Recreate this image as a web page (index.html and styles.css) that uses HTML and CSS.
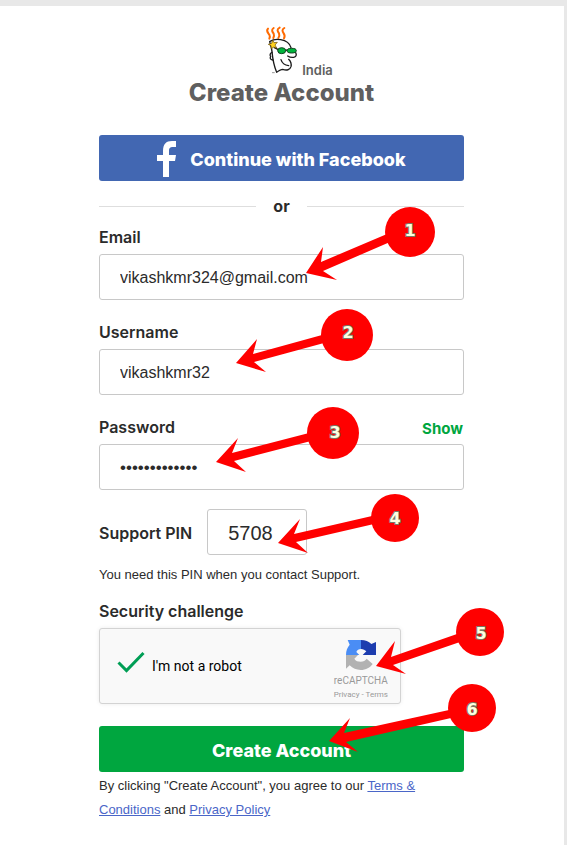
FILE: index.html
```html
<!DOCTYPE html>
<html lang="en">
<head>
<meta charset="utf-8">
<meta name="viewport" content="width=device-width, initial-scale=1">
<title>Create Account</title>
<link rel="stylesheet" href="styles.css">
</head>
<body>
<main class="card">
  <form class="signup">
    <header class="header">
      <div class="brand">
        <svg class="logo" viewBox="252 33 105 147" aria-hidden="true">
          <g fill="none" stroke="#ff6a00" stroke-width="6" stroke-linecap="round" stroke-linejoin="round">
            <path d="M264 41c-7 7 0 12 4 18 2 4 2 8 0 12"/>
            <path d="M281 39c-8 5-4 11 0 17 2 5 1 9-1 13"/>
            <path d="M299 38c-10 5-6 11-2 17 2 5 1 10-2 14"/>
            <path d="M313 39c-8 5-6 10-2 16 4 6 4 10 1 15"/>
          </g>
          <path d="M271 80c8-6 18-7 30-6 18 1 30 10 33 24l14 2c2 3 1 7-1 10l-2 14c0 5-3 5-13 5-5 1-7 3-5 8 7 6 10 14 7 22-3 9-13 13-25 8-5-1-9 3-18 9-7-18-10-39-12-60" fill="#fff"/>
          <g fill="none" stroke="#1b1b1b" stroke-width="4" stroke-linecap="round" stroke-linejoin="round">
            <path d="M270 79c9-6 20-7 32-5 17 3 27 10 31 24"/>
            <path d="M269 80c3 10 6 18 7 30 2 22 6 43 14 62 8-6 13-9 18-9 12 4 22 2 25-8 2-9-1-16-7-22"/>
            <path d="M347 113c4 7 1 13-6 14-7 1-12 0-18-4"/>
            <path d="M303 134c3 10 11 17 23 18"/>
            <path d="M276 112c-6 2-7 9-4 13-3 4-1 9 6 10"/>
            <path d="M283 98l12 6M317 105l6 1"/>
          </g>
          <path d="M276 173h8" stroke="#999" stroke-width="3"/>
          <ellipse cx="305" cy="107" rx="12" ry="9" fill="#00b53c" stroke="#123f1f" stroke-width="3"/>
          <ellipse cx="335" cy="107" rx="14" ry="7" fill="#00b53c" stroke="#123f1f" stroke-width="3"/>
          <path d="M278 75l4 8 10-1-7 8 5 9-10-3-6 6-1-10-8-4 10-3z" fill="#ffd21f" stroke="#5d4300" stroke-width="2"/>
        </svg>
        <span class="country">India</span>
      </div>
      <h1 class="title">Create Account</h1>
    </header>

    <button class="button facebook" type="button">
      <svg class="facebook-icon" viewBox="0 0 20 36" aria-hidden="true"><path d="M6 36V20H0v-6h6v-4C6 3 9 0 15 0h4v6h-3c-3 0-4 1-4 4v4h7l-1 6h-6v16z" fill="#fff"/></svg>
      <span>Continue with Facebook</span>
    </button>

    <div class="divider">or</div>

    <div class="field">
      <label class="label" for="email">Email</label>
      <input class="input" id="email" type="email" value="vikashkmr324@gmail.com">
    </div>
    <div class="field">
      <label class="label" for="username">Username</label>
      <input class="input" id="username" type="text" value="vikashkmr32">
    </div>
    <div class="field">
      <div class="label-row">
        <label class="label" for="password">Password</label>
        <button class="show" type="button">Show</button>
      </div>
      <input class="input password" id="password" type="password" value="abcdefghijklm">
    </div>

    <div class="pin-row">
      <label class="label" for="pin">Support PIN</label>
      <input class="input pin" id="pin" type="text" value="5708">
    </div>
    <p class="hint">You need this PIN when you contact Support.</p>

    <h2 class="label">Security challenge</h2>
    <section class="captcha">
      <label class="robot">
        <input class="robot-box" type="checkbox" checked>
        <svg class="check" viewBox="0 0 28 22" aria-hidden="true"><path d="M1.5 11.500l8 8L26.500 2" fill="none" stroke="#009e55" stroke-width="3"/></svg>
        <span>I'm not a robot</span>
      </label>
      <div class="captcha-brand">
        <svg class="captcha-logo" viewBox="0 0 90 90" aria-hidden="true">
          <path d="M0 45C0 32 4 22 11 14L5 0h40v27c-7 0-12 4-14 9l9 9z" fill="#4a8df5"/>
          <path d="M45 0c13 0 23 4 31 12l14-6v39H50l11-11c-4-4-9-7-16-7z" fill="#1d3daf"/>
          <path d="M0 45h36L25 56c4 7 11 9 19 9 8 0 14-3 18-9l18 16c-8 11-20 18-36 18-13 0-24-5-33-14L0 86z" fill="#b2b2b2"/>
        </svg>
        <span class="captcha-name">reCAPTCHA</span>
        <span class="captcha-links"><a href="#">Privacy</a> - <a href="#">Terms</a></span>
      </div>
    </section>

    <button class="button create" type="submit">Create Account</button>
    <p class="terms">By clicking "Create Account", you agree to our <a href="#">Terms &amp; Conditions</a> and <a href="#">Privacy Policy</a></p>

    <svg class="steps" viewBox="99 6 365 839" width="365" height="839">
      <g class="step">
        <path d="M306 273L323 247 321 262 387 234 390 242 323 271 337 280z"/>
        <circle cx="410" cy="232" r="25"/><text x="410" y="236">1</text>
      </g>
      <g class="step">
        <path d="M236 363L257 339 253 354 322 335 324 343 254 362 266 372z"/>
        <circle cx="347" cy="335" r="26"/><text x="348" y="338">2</text>
      </g>
      <g class="step">
        <path d="M216 462L238 438 232 453 309 433 311 441 234 461 246 472z"/>
        <circle cx="333" cy="433" r="26"/><text x="335" y="438">3</text>
      </g>
      <g class="step">
        <path d="M278 543L300 519 294 534 372 516 374 524 296 542 308 553z"/>
        <circle cx="395" cy="518" r="24"/><text x="395" y="524">4</text>
      </g>
      <g class="step">
        <path d="M376 666L395 641 391 657 457 634 460 642 393 665 406 674z"/>
        <circle cx="480" cy="632" r="24"/><text x="481" y="639">5</text>
      </g>
      <g class="step">
        <path d="M329 741L350 718 344 733 449 710 451 718 346 742 358 752z"/>
        <circle cx="472" cy="708" r="24"/><text x="472" y="715">6</text>
      </g>
    </svg>
  </form>
</main>
</body>
</html>
```
FILE: styles.css
```css
* {
  box-sizing: border-box;
}

body {
  margin: 0;
  background: #e8e8e8;
  color: #2b2b2b;
  font-family: "Liberation Sans", Arial, sans-serif;
  font-size: 13px;
}

.card {
  min-height: calc(100vh - 6px);
  margin: 6px 3px 0 0;
  padding: 20px 17px 20px 16px;
  background: #fff;
}

.signup {
  position: relative;
  display: flex;
  flex-direction: column;
  max-width: 365px;
  margin: 0 auto;
}

.header {
  display: flex;
  flex-direction: column;
  align-items: center;
  height: 109px;
  color: #5f5f5f;
  font-family: Inter, sans-serif;
}

.brand {
  display: flex;
  align-items: flex-end;
  gap: 3px;
  padding-left: 34px;
}

.logo {
  width: 35px;
  height: 49px;
}

.country {
  font-size: 13px;
  font-weight: 600;
  line-height: 10px;
}

.title {
  margin: 2px 0 0;
  font-size: 24px;
  font-weight: 800;
  line-height: 32px;
}

.button {
  display: flex;
  align-items: center;
  justify-content: center;
  height: 46px;
  padding: 2px 0 0;
  border: 0;
  border-radius: 3px;
  color: #fff;
  font: 800 18px Inter, sans-serif;
}

.facebook {
  gap: 13px;
  background: #4267b2;
}

.facebook-icon {
  width: 20px;
  height: 36px;
}

.divider {
  display: flex;
  align-items: center;
  gap: 17px;
  margin: 15px 0 9px;
  font: 700 16px/20px Inter, sans-serif;
}

.divider::before,
.divider::after {
  content: "";
  flex: 1;
  height: 1px;
  background: #dedede;
}

.field {
  display: flex;
  flex-direction: column;
  margin-bottom: 20px;
}

.label {
  margin: 0 0 5px;
  font: 600 16px/24px Inter, sans-serif;
}

.label-row {
  display: flex;
  justify-content: space-between;
}

.show {
  height: 24px;
  padding: 2px 1px 0;
  border: 0;
  background: none;
  color: #00a63f;
  font: 700 15px Inter, sans-serif;
}

.input {
  width: 100%;
  height: 46px;
  padding: 2px 20px 0;
  border: 1px solid #c8c8c8;
  border-radius: 3px;
  background: #fff;
  color: #2b2b2b;
  font: 16px "Liberation Sans", Arial, sans-serif;
}

.password {
  font-size: 17px;
}

.pin-row {
  display: flex;
  align-items: center;
  gap: 15px;
  margin-top: -1px;
}

.pin-row .label {
  margin: 2px 0 0;
}

.pin {
  width: 100px;
  font-size: 20px;
}

.hint {
  margin: 10px 0 14px;
  line-height: 20px;
}

.captcha {
  display: flex;
  justify-content: space-between;
  max-width: 302px;
  height: 76px;
  margin-bottom: 22px;
  padding: 0 12px 0 17px;
  border: 1px solid #d3d3d3;
  border-radius: 3px;
  background: #f9f9f9;
  box-shadow: 0 0 4px rgba(0, 0, 0, 0.08);
}

.robot {
  display: flex;
  align-items: center;
  gap: 7px;
  color: #000;
  font: 14px Roboto, sans-serif;
}

.robot-box {
  position: absolute;
  margin: 0;
  opacity: 0;
}

.check {
  width: 28px;
  height: 22px;
  margin-bottom: 8px;
}

.captcha-brand {
  display: flex;
  flex-direction: column;
  align-items: center;
  padding-top: 11px;
  color: #999;
  font-family: Roboto, sans-serif;
}

.captcha-logo {
  width: 30px;
  height: 30px;
}

.captcha-name {
  margin-top: 4px;
  font-size: 10px;
  line-height: 14px;
}

.captcha-links {
  font-size: 8px;
  line-height: 14px;
}

.captcha-links a {
  color: inherit;
  text-decoration: none;
}

.create {
  background: #00a63f;
}

.terms {
  margin: 2px 0 0;
  line-height: 24px;
}

.terms a {
  color: #4a66c8;
}

.steps {
  position: absolute;
  top: -20px;
  left: 0;
  overflow: visible;
  pointer-events: none;
}

.step {
  fill: #f00;
}

.step text {
  fill: #ffffe0;
  stroke: #777766;
  stroke-width: 2px;
  paint-order: stroke;
  font: 700 16px "DejaVu Sans", sans-serif;
  text-anchor: middle;
}
```
